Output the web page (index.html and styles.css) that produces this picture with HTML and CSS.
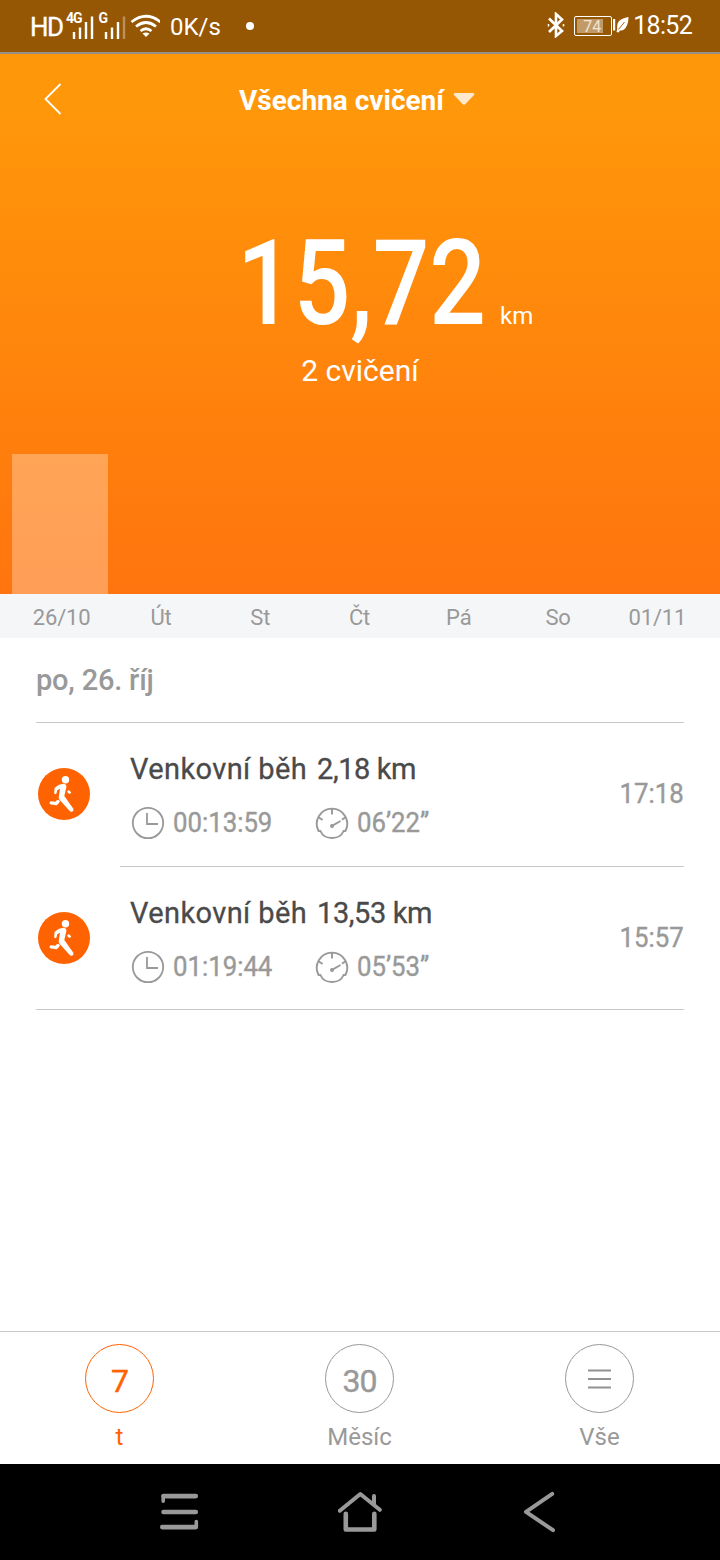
FILE: index.html
```
<!DOCTYPE html>
<html lang="cs">

<head>
    <meta charset="UTF-8">
    <meta name="viewport" content="width=device-width, initial-scale=1.0">
    <title>Všechna cvičení</title>
    <link rel="stylesheet" href="styles.css">
</head>

<body>
    <!-- Shared icons -->
    <svg class="icon-defs" width="0" height="0">
        <symbol id="icon-run" viewBox="0 0 52 52">
            <circle cx="26" cy="26" r="26" fill="#ff6200" />
            <circle cx="27.5" cy="11.7" r="3.7" fill="#fff" />
            <path d="M20.5 17 L25 15.7 Q28.500 15.700 28.400 19 L26.300 28 L35.200 40.500 Q36.200 42.500 34.500 43.500 Q32.800 44.200 31.500 42.700 L21.500 31.800 Q20.400 30.500 20.800 28.500 L22 20.800 L19.200 22.200 L18.500 25.500 Q17.300 27 16.200 25.500 L16.500 20 Z" fill="#fff" />
            <path d="M13.300 34.900 L18 35.600 L20 33.500" fill="none" stroke="#fff" stroke-width="3.400" stroke-linecap="round" stroke-linejoin="round" />
            <path d="M30.500 23.600 L31.700 24.500" stroke="#fff" stroke-width="2.600" stroke-linecap="round" />
        </symbol>
        <symbol id="icon-clock" viewBox="0 0 34 34">
            <circle cx="17" cy="17" r="15.2" fill="none" stroke="#999" stroke-width="1.8" />
            <path d="M16 7 V18 H27" fill="none" stroke="#999" stroke-width="1.8" />
        </symbol>
        <symbol id="icon-pace" viewBox="0 0 34 34">
            <path d="M3.600 25 A15.200 15.200 0 1 1 30.400 25 H28.600 C26.500 30 22 32 17 32 S7.500 30 5.400 25 Z M17 2.500 V8.500 M4 11.500 L7.600 14 M30 11.500 L27 13.700 M17 19.800 L25.500 15" fill="none" stroke="#999" stroke-width="1.9" />
            <circle cx="17" cy="20" r="2" fill="#999" />
        </symbol>
    </svg>

    <div class="status-bar">
        <span class="hd">HD</span>
        <svg class="signals" width="96" height="34" viewBox="64 8 96 34" fill="none" stroke="#fff">
            <g fill="#fff" stroke="none" class="net">
                <text x="66" y="22.500">4G</text>
                <text x="98.500" y="22.500">G</text>
            </g>
            <path d="M74 39 V32 M80 39 V27.500 M86 39 V22 M92 39 V16.500 M106 39 V32 M112 39 V27.500 M118 39 V22" stroke-width="2.400" />
            <path d="M124 39 V16.500" stroke-width="2.400" opacity=".35" />
            <path d="M131.500 22 Q146 10.500 160.500 22 M136 26.500 Q146 18.500 156 26.500 M140.500 31 Q146 26.500 151.500 31" stroke-width="2.700" />
            <path d="M142.500 33.500 Q146 31.500 149.500 33.500 L146 37 Z" fill="#fff" stroke="none" />
        </svg>
        <span class="speed">0K/s</span>
        <span class="dot"></span>
        <svg class="bluetooth" width="18" height="26" viewBox="0 0 18 26" fill="none" stroke="#fff" stroke-width="2.600">
            <path d="M2 6.500 L15 19 L9 24 V2 L15 7.500 L2 20" />
            <path d="M1.500 12 V14.500 M16.500 12 V14.500" stroke-width="1.500" />
        </svg>
        <span class="battery"><span class="level">74</span></span>
        <svg class="leaf" width="16" height="18" viewBox="0 0 16 18">
            <path d="M0 3 H2.200 V14.500 H0 Z M15.500 1 C10 2 5 4 4.300 9 C4 12 4.500 13.500 3.500 16 L5.500 16.500 L7 14.500 C12 15.500 15.500 9 15.500 1 Z" fill="#fff" />
            <path d="M5.500 13.500 L11.500 6" stroke="#965705" stroke-width=".9" />
        </svg>
        <span class="time">18:52</span>
    </div>

    <div class="summary">
        <div class="title-bar">
            <svg class="back" width="20" height="34" viewBox="0 0 20 34" fill="none" stroke="#fff" stroke-width="1.800">
                <path d="M17.500 2 L2.500 17 L17.500 32" />
            </svg>
            <h1>Všechna cvičení</h1>
            <svg class="caret" width="22" height="13" viewBox="0 0 22 13">
                <path d="M1.500 0 H20.500 Q22 .5 21 2 L12.500 11 Q11 12.500 9.500 11 L1 2 Q0 .5 1.500 0 Z" fill="#ffe8cc" />
            </svg>
        </div>
        <div class="distance">
            <span class="value">15,72</span>
            <span class="unit">km</span>
        </div>
        <p class="count">2 cvičení</p>
        <div class="chart">
            <div class="bar"></div>
        </div>
    </div>

    <div class="days">
        <span>26/10</span>
        <span>Út</span>
        <span>St</span>
        <span>Čt</span>
        <span>Pá</span>
        <span>So</span>
        <span>01/11</span>
    </div>

    <!-- Workout list -->
    <div class="list">
        <h2>po, 26. říj</h2>
        <div class="workout">
            <svg class="run" width="52" height="52"><use href="#icon-run" /></svg>
            <div class="details">
                <div class="info">
                    <div class="name"><span class="sport">Venkovní běh</span><span class="km">2,18 km</span></div>
                    <div class="stats">
                        <svg width="34" height="34"><use href="#icon-clock" /></svg>
                        <span class="duration">00:13:59</span>
                        <svg width="34" height="34"><use href="#icon-pace" /></svg>
                        <span class="pace">06’22”</span>
                    </div>
                </div>
                <span class="start">17:18</span>
            </div>
        </div>
        <div class="workout">
            <svg class="run" width="52" height="52"><use href="#icon-run" /></svg>
            <div class="details">
                <div class="info">
                    <div class="name"><span class="sport">Venkovní běh</span><span class="km">13,53 km</span></div>
                    <div class="stats">
                        <svg width="34" height="34"><use href="#icon-clock" /></svg>
                        <span class="duration">01:19:44</span>
                        <svg width="34" height="34"><use href="#icon-pace" /></svg>
                        <span class="pace">05’53”</span>
                    </div>
                </div>
                <span class="start">15:57</span>
            </div>
        </div>
    </div>

    <!-- Period tabs -->
    <div class="tabs">
        <div class="tab active">
            <span class="circle">7</span>
            <span>t</span>
        </div>
        <div class="tab">
            <span class="circle">30</span>
            <span>Měsíc</span>
        </div>
        <div class="tab">
            <span class="circle menu">
                <svg width="24" height="22" viewBox="0 0 24 22" stroke="#929292" stroke-width="2">
                    <path d="M0 2.500 H23 M0 11 H23 M0 19.500 H23" />
                </svg>
            </span>
            <span>Vše</span>
        </div>
    </div>

    <!-- System navigation -->
    <div class="nav">
        <svg width="44" height="46" viewBox="0 0 44 46" fill="none" stroke="#999" stroke-width="4.600" stroke-linecap="round" stroke-linejoin="round">
            <path d="M5.500 7.100 H37.800 M5.500 23 H37.800 M4.300 38.100 H37.800" />
            <path d="M5.200 7 V12.300 M38.300 38 V32.500" stroke-width="3.600" />
        </svg>
        <svg width="44" height="46" viewBox="0 0 44 46" fill="none" stroke="#999" stroke-width="4" stroke-linecap="round" stroke-linejoin="round">
            <path d="M1.800 21.700 L22.300 5 L41.800 20.800 M36 7 V15" />
            <path d="M7.800 24.800 V40.500 H36.300 V24.800" stroke-width="4.600" />
        </svg>
        <svg width="44" height="46" viewBox="0 0 44 46" fill="none" stroke="#999" stroke-width="4" stroke-linecap="round" stroke-linejoin="round">
            <path d="M34.200 4.800 L8 22.800 L35 41.200" />
        </svg>
    </div>
</body>

</html>
```
FILE: styles.css
```
/* General Styles */
* {
    box-sizing: border-box;
}

body {
    font-family: Roboto, "Noto Sans", sans-serif;
    margin: 0;
    height: 1560px;
    display: flex;
    flex-direction: column;
    background-color: #fff;
    color: #999;
    white-space: nowrap;
}

h1,
h2,
p {
    margin: 0;
}

svg {
    display: block;
    flex-shrink: 0;
}

.icon-defs {
    position: absolute;
}

/* Status bar */
.status-bar {
    height: 54px;
    padding: 0 28px 2px 30px;
    display: flex;
    align-items: center;
    background-color: #965705;
    border-bottom: 2px solid #96908a;
    color: #fff;
    font-size: 24px;
}

.hd {
    width: 34px;
    font-size: 26px;
    letter-spacing: -1.5px;
    padding-top: 3px;
    -webkit-text-stroke: 0.3px #fff;
}

.signals {
    margin-right: 10px;
}

.net {
    font-size: 14px;
    font-weight: 700;
    letter-spacing: -1px;
}

.speed {
    width: 76px;
    padding-top: 4px;
}

.dot {
    width: 8px;
    height: 8px;
    border-radius: 50%;
    background-color: #fff;
    margin-top: 2px;
}

.bluetooth {
    margin-left: auto;
    margin-right: 9px;
}

.battery {
    width: 38px;
    height: 20px;
    padding: 2px;
    border: 1.5px solid #fff;
    border-radius: 2px;
    margin-right: 1px;
    margin-top: 1px;
}

.level {
    display: block;
    width: 26px;
    height: 100%;
    padding-left: 6px;
    background-color: #c29a67;
    color: #f0e5d8;
    font-size: 16px;
    line-height: 16px;
}

.leaf {
    margin-right: 4px;
}

.time {
    font-size: 25px;
    letter-spacing: -0.7px;
}

/* Summary */
.summary {
    height: 540px;
    padding: 0 12px;
    display: flex;
    flex-direction: column;
    background: linear-gradient(#ff970a 10%, #ff740e);
    color: #fff;
}

.title-bar {
    height: 90px;
    padding-left: 31px;
    display: flex;
    align-items: center;
}

.title-bar h1 {
    margin-left: 176px;
    padding-top: 3px;
    font-size: 28px;
    font-weight: 700;
}

.caret {
    margin-left: 9px;
}

.distance {
    height: 193px;
    padding-left: 225px;
    display: flex;
    align-items: flex-end;
}

.value {
    width: 263px;
    font-size: 118px;
    font-weight: 500;
    line-height: 105px;
    transform: scaleX(0.845);
    transform-origin: left;
}

.unit {
    font-size: 24px;
    line-height: 42px;
}

.count {
    text-align: center;
    font-size: 30px;
    line-height: 67px;
}

.chart {
    flex: 1;
    display: flex;
    align-items: flex-end;
}

.bar {
    width: 96px;
    height: 140px;
    background-color: rgba(255, 255, 255, 0.3);
}

.days {
    height: 44px;
    padding: 3px 13px 0 12px;
    display: grid;
    grid-template-columns: repeat(7, 1fr);
    align-items: center;
    text-align: center;
    background-color: #f5f6f8;
    font-size: 22px;
    letter-spacing: -0.2px;
}

/* Workout list */
.list {
    flex: 1;
    padding: 0 36px;
}

.list h2 {
    height: 85px;
    border-bottom: 1px solid #c8c8c8;
    font-size: 29px;
    font-weight: 500;
    line-height: 84px;
    letter-spacing: -0.2px;
}

.workout {
    height: 144px;
    display: flex;
}

.run {
    margin: 45px 30px 0 2px;
}

.details {
    flex: 1;
    padding-left: 10px;
    display: flex;
    justify-content: space-between;
    border-bottom: 1px solid #c8c8c8;
}

.workout:last-child {
    height: 143px;
    border-bottom: 1px solid #c8c8c8;
}

.workout:last-child .details {
    border-bottom: none;
}

.name {
    display: flex;
    padding-top: 25px;
    color: #4a4a4a;
    font-size: 29px;
    line-height: 42px;
    -webkit-text-stroke: 0.3px #4a4a4a;
}

.sport {
    width: 187px;
    letter-spacing: 0.4px;
}

.km {
    letter-spacing: -0.4px;
}

.stats {
    display: flex;
    align-items: center;
    margin-top: 16px;
    padding-left: 1px;
    font-size: 28px;
    line-height: 32px;
}

.stats span,
.start {
    transform: scaleX(0.92);
    -webkit-text-stroke: 0.4px #999;
}

.stats span {
    margin-left: 8px;
    margin-top: -1px;
    transform-origin: left;
}

.duration {
    width: 142px;
}

.start {
    font-size: 28px;
    line-height: 142px;
    transform-origin: right;
}

/* Period tabs */
.tabs {
    height: 133px;
    display: grid;
    grid-template-columns: repeat(3, 1fr);
    border-top: 1px solid #c8c8c8;
}

.tab {
    display: flex;
    flex-direction: column;
    align-items: center;
    padding: 12px 1px 0 0;
    font-size: 24px;
}

.circle {
    width: 69px;
    height: 69px;
    margin-bottom: 10px;
    padding-top: 4px;
    display: flex;
    align-items: center;
    justify-content: center;
    border: 1px solid #999;
    border-radius: 50%;
    font-size: 32px;
    letter-spacing: -1px;
    -webkit-text-stroke: 0.4px;
}

.menu {
    padding-top: 0;
}

.active {
    color: #ff6200;
}

.active .circle {
    border-color: #ff6200;
}

/* System navigation */
.nav {
    height: 96px;
    padding: 0 158px;
    display: flex;
    align-items: center;
    justify-content: space-between;
    background-color: #000;
}
```
